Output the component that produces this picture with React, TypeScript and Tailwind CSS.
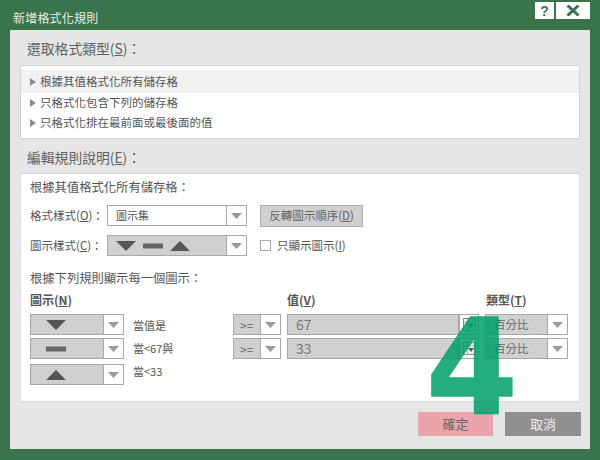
const font = '[font-family:"Noto_Sans_CJK_TC","Liberation_Sans",sans-serif]'

function Arrow() {
  return (
    <svg width="11" height="6" viewBox="0 0 11 6">
      <path d="M0 0h11L5.5 6z" fill="#999999" />
    </svg>
  )
}

function Caret() {
  return (
    <svg className="shrink-0" width="6" height="8" viewBox="0 0 6 8">
      <path d="M0 0l6 4-6 4z" fill="#8c8c8c" />
    </svg>
  )
}

function Marker({ kind }: { kind: 'down' | 'flat' | 'up' }) {
  if (kind === 'flat') {
    return (
      <svg width="20" height="10" viewBox="0 0 20 10">
        <rect y="2.5" width="20" height="5" fill="#666666" />
      </svg>
    )
  }
  return (
    <svg width="20" height="10" viewBox="0 0 20 10">
      <path d={kind === 'down' ? 'M0 0h20L10 10z' : 'M0 10h20L10 0z'} fill="#555555" />
    </svg>
  )
}

function Select({
  width,
  height = 'h-[21px]',
  filled,
  arrowWidth = 'w-[19px]',
  children,
}: {
  width: string
  height?: string
  filled?: boolean
  arrowWidth?: string
  children: React.ReactNode
}) {
  return (
    <div className={`flex shrink-0 border border-[#a8a8a8] bg-white ${width} ${height}`}>
      <div className={`flex min-w-0 flex-1 items-center border-r border-[#a8a8a8] ${filled ? 'bg-[#d0d0d0]' : ''}`}>
        {children}
      </div>
      <div className={`flex shrink-0 items-center justify-center ${arrowWidth}`}>
        <Arrow />
      </div>
    </div>
  )
}

function RefButton() {
  return (
    <div className="flex h-[21px] w-5 shrink-0 items-center justify-center border border-[#a8a8a8] bg-white">
      <svg width="13" height="13" viewBox="0 0 13 13">
        <rect x="0.5" y="0.5" width="12" height="12" fill="#f2f2f2" stroke="#8c8c8c" />
        <path d="M1 4h11M4.5 1v11" stroke="#b5b5b5" />
        <path d="M5 6h6L8 10z" fill="#555555" />
      </svg>
    </div>
  )
}

function RuleRow({
  kind,
  label,
  labelClass,
  op,
  value,
  className,
}: {
  kind: 'down' | 'flat' | 'up'
  label: string
  labelClass: string
  op?: string
  value?: string
  className: string
}) {
  return (
    <div className={`flex h-[21px] items-center ${className}`}>
      <Select width="w-[94px]" filled>
        <div className="flex w-full justify-center pr-[22px] pl-0">
          <Marker kind={kind} />
        </div>
      </Select>
      <span className={`ml-[9px] w-[100px] shrink-0 text-[11px] text-[#555555] ${labelClass}`}>{label}</span>
      {op && (
        <>
          <Select width="w-[48px]" filled>
            <span className="pl-1.5 text-[12px] text-[#666666]">{op}</span>
          </Select>
          <div className="ml-1.5 flex h-[21px] w-[172px] shrink-0 items-center border border-[#a8a8a8] bg-[#d0d0d0] pl-2 text-[14px] text-[#777777]">
            {value}
          </div>
          <RefButton />
          <div className="ml-1.5">
            <Select width="w-[83px]" filled>
              <span className="pl-2 text-[11.5px] text-[#666666]">百分比</span>
            </Select>
          </div>
        </>
      )}
    </div>
  )
}

export default function App() {
  return (
    <div className={`relative flex h-[460px] w-[600px] flex-col overflow-hidden bg-[#3a744c] ${font}`}>
      <div className="flex h-[30px] shrink-0 items-start justify-between pr-[10px] pl-[13px]">
        <span className="mt-[9px] text-[12px] leading-[18px] tracking-[0.2px] text-[#e8efe9]">新增格式化規則</span>
        <div className="mt-0.5 flex gap-[2px]">
          <div className="flex h-[17px] w-[19px] items-center justify-center bg-white text-[14px] leading-none font-bold text-[#3a744c] [font-family:'Liberation_Sans',sans-serif]">
            ?
          </div>
          <div className="flex h-[17px] w-[34px] items-center justify-center bg-white">
            <svg width="14" height="11" viewBox="0 0 14 11">
              <path d="M1.5 0.5l11 10M12.5 0.5l-11 10" stroke="#3a744c" strokeWidth="3" />
            </svg>
          </div>
        </div>
      </div>

      <div className="mx-[10px] flex h-[419px] flex-col bg-[#e6e6e6] pr-[10px] pl-[10px]">
        <div className="mt-2 pl-[7px] text-[13.8px] leading-[20px] text-[#606060]">
          選取格式類型(<span className="underline">S</span>)：
        </div>
        <div className="mt-[7px] h-[74px] border border-[#d2d2d2] bg-white pt-1 text-[11.5px] text-[#555555]">
          <div className="flex h-[23px] items-center gap-1 bg-[#f2f2f2] pl-[9px]">
            <Caret />根據其值格式化所有儲存格
          </div>
          <div className="flex h-[19px] items-center gap-1 pl-[9px]">
            <Caret />只格式化包含下列的儲存格
          </div>
          <div className="flex h-[21px] items-center gap-1 pl-[9px]">
            <Caret />只格式化排在最前面或最後面的值
          </div>
        </div>

        <div className="mt-2 pl-[7px] text-[13.8px] leading-[20px] text-[#606060]">
          編輯規則說明(<span className="underline">E</span>)：
        </div>
        <div className="mt-1.5 h-[229px] border border-[#d8d8d8] bg-white pt-1 pl-[9px] text-[#555555]">
          <div className="text-[12.3px] leading-[18px]">根據其值格式化所有儲存格：</div>

          <div className="mt-[9px] flex h-[21px] items-center">
            <span className="w-[77px] shrink-0 text-[11.5px]">
              格式樣式(<span className="underline">O</span>)：
            </span>
            <Select width="w-[140px]">
              <span className="pl-2 text-[11px]">圖示集</span>
            </Select>
            <div className="ml-[13px] flex h-[22px] w-[103px] items-center justify-center border border-[#b0b0b0] bg-[#d0d0d0] text-[11.5px] text-[#666666]">
              反轉圖示順序(<span className="underline">D</span>)
            </div>
          </div>

          <div className="mt-[9px] flex h-[21px] items-center">
            <span className="w-[77px] shrink-0 text-[11.5px]">
              圖示樣式(<span className="underline">C</span>)：
            </span>
            <Select width="w-[140px]" filled>
              <div className="flex items-center gap-[7px] pl-2">
                <Marker kind="down" />
                <Marker kind="flat" />
                <Marker kind="up" />
              </div>
            </Select>
            <div className="ml-[13px] h-[11px] w-[11px] border border-[#a8a8a8]" />
            <span className="ml-[6px] text-[11.5px]">
              只顯示圖示(<span className="underline">I</span>)
            </span>
          </div>

          <div className="mt-[13px] text-[12.3px] leading-[18px]">根據下列規則顯示每一個圖示：</div>

          <div className="mt-1 flex h-[18px] items-center text-[12px] font-bold">
            <span className="w-[257px]">
              圖示(<span className="underline">N</span>)
            </span>
            <span className="w-[199px]">
              值(<span className="underline">V</span>)
            </span>
            <span>
              類型(<span className="underline">T</span>)
            </span>
          </div>

          <RuleRow className="mt-[5px]" labelClass="translate-y-px" kind="down" label="當值是" op=">=" value="67" />
          <RuleRow className="mt-[3px]" labelClass="" kind="flat" label="當<67與" op=">=" value="33" />
          <RuleRow className="mt-[5px]" labelClass="-translate-y-[3px]" kind="up" label="當<33" />
        </div>

        <div className="mt-[10px] -mr-px flex justify-end gap-3">
          <div className="flex h-6 w-[75px] items-center justify-center bg-[#eba4ab] text-[13px] text-[#666666]">
            確定
          </div>
          <div className="flex h-6 w-[76px] items-center justify-center bg-[#8f8f90] text-[13px] text-[#f0f0f0]">
            取消
          </div>
        </div>
      </div>

      <span className="absolute top-[293px] left-[426px] text-[132px] leading-[150px] font-bold text-[#009e6a] opacity-85 [-webkit-text-stroke:1.5px_#009e6a] [font-family:'DejaVu_Sans',sans-serif]">
        4
      </span>
    </div>
  )
}
